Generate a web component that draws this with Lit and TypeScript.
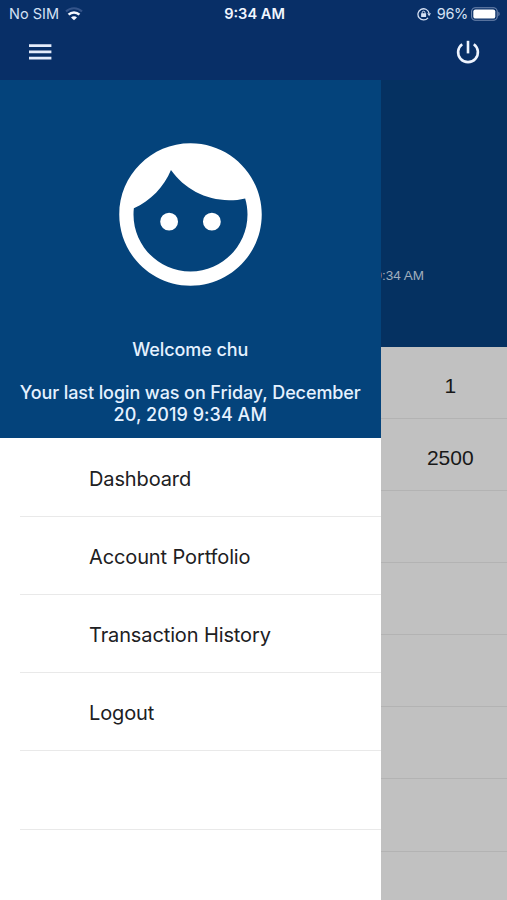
import { LitElement, html, css } from "lit";
import { customElement } from "lit/decorators.js";

@customElement("status-bar")
class StatusBar extends LitElement {
  static styles = css`
    :host { display: grid; grid-template-columns: 1fr auto 1fr; align-items: center; height: 28px; padding: 0 7px 0 9px; color: #d5e1f4; font-size: 14.5px; }
    .side { display: flex; align-items: center; height: 27px; padding-bottom: 1px; }
    .end { justify-content: flex-end; }
    .wifi { margin-left: 6px; }
    .time { color: #f1f6ff; font-weight: 600; font-size: 14.6px; }
    .lock { margin-right: 6px; }
    .percent { letter-spacing: -0.35px; }
    .battery { margin-left: 3px; }
    svg { display: block; }
  `;
  render() {
    return html`
      <div class="side"><span>No SIM</span>
        <svg class="wifi" width="18" height="14" viewBox="0 0 18 14" fill="none" stroke="#f4f8ff" stroke-width="2.5">
          <path d="M1 4.6a11.4 11.4 0 0 1 16 0" stroke="#34548a" stroke-width="2.1"/>
          <path d="M3.6 7.7a7.6 7.6 0 0 1 10.8 0"/>
          <path d="M9 13.2 6 10.6a4 4 0 0 1 6 0z" fill="#f4f8ff" stroke="none"/>
        </svg>
      </div>
      <span class="time">9:34 AM</span>
      <div class="side end">
        <svg class="lock" width="14" height="14" viewBox="0 0 14 14" fill="none" stroke="#d5e1f4" stroke-width="1.3">
          <path d="M11 10.8A5.6 5.6 0 1 1 12 6"/>
          <path d="M10.2 6.2h3.8l-1.9 3z" fill="#d5e1f4" stroke="none"/>
          <path d="M5.2 6.8V5.6a1.4 1.4 0 0 1 2.8 0v1.2" stroke-width="1"/>
          <rect x="4.1" y="6.2" width="5" height="3.8" rx=".6" fill="#d5e1f4" stroke="none"/>
        </svg>
        <span class="percent">96%</span>
        <svg class="battery" width="29" height="14" viewBox="0 0 29 14">
          <rect x=".6" y=".8" width="25.6" height="12.4" rx="3.8" fill="none" stroke="#7189b0" stroke-width="1.1"/>
          <rect x="2.3" y="2.4" width="22" height="9.2" rx="2.2" fill="#fff"/>
          <path d="M27.4 4.8c1.6.6 1.6 3.8 0 4.4z" fill="#7189b0"/>
        </svg>
      </div>`;
  }
}

@customElement("nav-bar")
class NavBar extends LitElement {
  static styles = css`
    :host { display: flex; justify-content: space-between; align-items: center; height: 48px; padding: 0 26px 4px 28px; }
    svg { display: block; }
  `;
  render() {
    return html`
      <svg width="24" height="18" viewBox="0 0 24 18" fill="#e4ecfb"><path d="M1 1.2h22.4v2.7H1zM1 7.5h22.4v2.7H1zM1 13.7h22.4v2.7H1z"/></svg>
      <svg width="26" height="26" viewBox="0 0 26 26" fill="none" stroke="#eef4ff" stroke-width="2.6">
        <path d="M13 1.8v12.6"/><path d="M7.2 5.2a9.9 9.9 0 1 0 11.6 0"/>
      </svg>`;
  }
}

@customElement("side-drawer")
class SideDrawer extends LitElement {
  static styles = css`
    :host { display: flex; flex-direction: column; background: #fff; color: #202022; overflow: hidden; }
    .profile { display: flex; flex-direction: column; align-items: center; flex: none; box-sizing: border-box; height: 358.4px; padding-top: 48.5px; background: #04437b; color: #e5f1ff; font-weight: 500; font-size: 18px; line-height: 22px; text-align: center; letter-spacing: -0.09px; }
    .face { display: block; flex: none; }
    .welcome { margin-top: 39px; }
    .login { margin-top: 21px; white-space: nowrap; }
    .last { letter-spacing: 0.05px; }
    .item { display: flex; align-items: center; flex: none; box-sizing: border-box; height: 78.15px; margin-left: 20px; padding-left: 69px; padding-top: 3px; border-bottom: 1px solid #e9e9e9; font-size: 20px; letter-spacing: -0.12px; }
    .item:first-of-type { height: 78.6px; }
  `;
  render() {
    return html`
      <div class="profile">
        <svg class="face" width="171" height="171" viewBox="0 0 24 24" fill="#fff">
          <path d="M9 11.75a1.25 1.25 0 1 0 0 2.5 1.25 1.25 0 0 0 0-2.5zm6 0a1.25 1.25 0 1 0 0 2.5 1.25 1.25 0 0 0 0-2.5zM12 2C6.48 2 2 6.48 2 12s4.48 10 10 10 10-4.48 10-10S17.52 2 12 2zm0 18c-4.41 0-8-3.59-8-8 0-.29.02-.58.05-.86 2.36-1.05 4.23-2.98 5.21-5.37C11.07 8.33 14.05 10 17.42 10c.78 0 1.53-.09 2.25-.26.21.71.33 1.47.33 2.26 0 4.41-3.59 8-8 8z"/>
        </svg>
        <div class="welcome">Welcome chu</div>
        <div class="login">Your last login was on Friday, December<br><span class="last">20, 2019 9:34 AM</span></div>
      </div>
      <nav>
      ${["Dashboard", "Account Portfolio", "Transaction History", "Logout", ""].map(
        (label) => html`<div class="item"><span>${label}</span></div>`
      )}</nav>`;
  }
}

@customElement("account-summary")
class AccountSummary extends LitElement {
  static styles = css`
    :host { display: block; background: #c1c1c1; color: #181818; overflow: hidden; }
    .hero { display: flex; justify-content: flex-end; box-sizing: border-box; height: 266.6px; padding: 187px 83px 0 0; background: #053161; color: #a0aebd; font: 13.5px/17px "Liberation Sans", Arial, sans-serif; white-space: nowrap; }
    .row { display: flex; align-items: center; justify-content: center; box-sizing: border-box; height: 72.15px; padding: 8px 0 0 13px; border-bottom: 1px solid #b3b3b3; font: 21px "Liberation Sans", Arial, sans-serif; }
  `;
  render() {
    return html`
      <div class="hero"><span>9:34 AM</span></div>
      ${["1", "2500", "", "", "", "", "", ""].map((value) => html`<div class="row">${value}</div>`)}`;
  }
}

@customElement("app-root")
class AppRoot extends LitElement {
  static styles = css`
    :host { display: flex; flex-direction: column; width: 507px; height: 900px; overflow: hidden; font-family: Inter, "Liberation Sans", sans-serif; background: #c1c1c1; }
    .header { flex: none; height: 80px; background: #082f67; }
    .body { display: grid; grid-template-columns: 380.5px 1fr; flex: 1; min-height: 0; }
  `;
  render() {
    return html`
      <div class="header"><status-bar></status-bar><nav-bar></nav-bar></div>
      <div class="body"><side-drawer></side-drawer><account-summary></account-summary></div>`;
  }
}
